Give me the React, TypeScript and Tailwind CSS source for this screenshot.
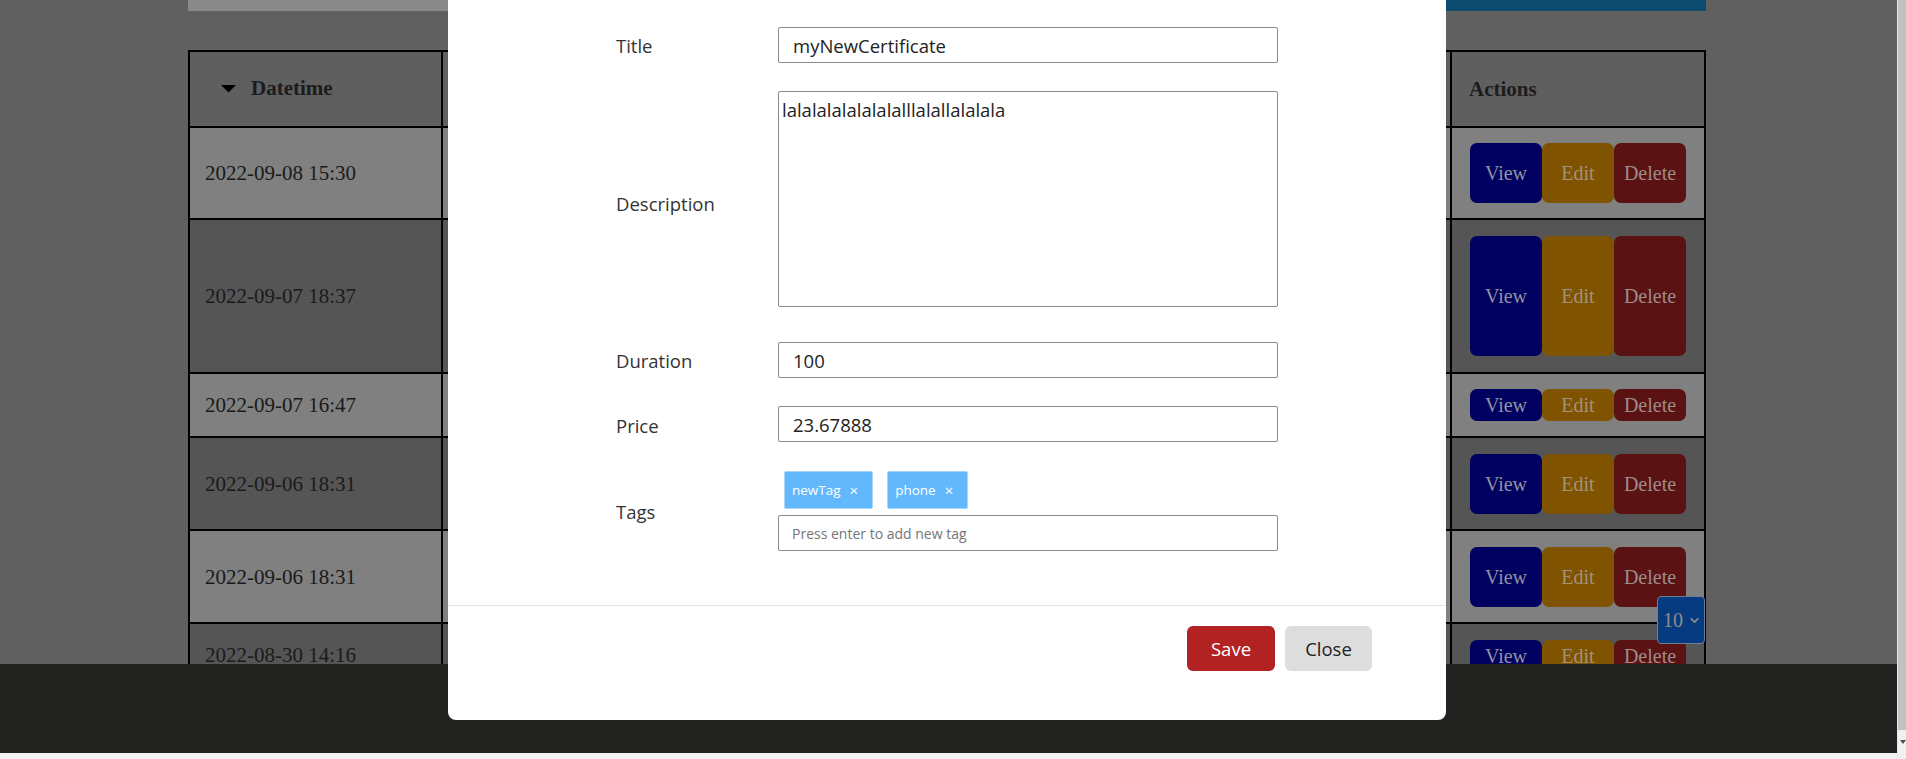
import React from 'react';
import { ChevronDown } from 'lucide-react';

interface Row {
  date: string;
  height: string;
  pad: string;
  dark: boolean;
}

const rows: Row[] = [
  { date: '2022-09-08 15:30', height: 'h-[92px]', pad: 'py-[15px]', dark: false },
  { date: '2022-09-07 18:37', height: 'h-[154px]', pad: 'py-4', dark: true },
  { date: '2022-09-07 16:47', height: 'h-[64px]', pad: 'py-[15px]', dark: false },
  { date: '2022-09-06 18:31', height: 'h-[93px]', pad: 'pt-4 pb-[15px]', dark: true },
  { date: '2022-09-06 18:31', height: 'h-[93px]', pad: 'pt-4 pb-[15px]', dark: false },
  { date: '2022-08-30 14:16', height: 'h-[64px]', pad: 'pt-4 pb-[14px]', dark: true },
];

const TableRow: React.FC<{ row: Row }> = ({ row }) => (
  <div className={`flex border-b-2 border-black ${row.height} ${row.dark ? 'bg-[#555555]' : 'bg-[#808080]'}`}>
    <div className="w-[253px] border-r-2 border-black flex items-center pl-[15px] pt-[2px] text-[21px] text-[#1a1a1a]">
      {row.date}
    </div>
    <div className="flex-1" />
    <div className={`w-[254px] border-l-2 border-black flex pl-[18px] ${row.pad}`}>
      <button className="w-[72px] h-full rounded-[7px] bg-[#000060] text-[20px] text-[#9292a0]">View</button>
      <button className="w-[72px] h-full rounded-[7px] bg-[#805300] text-[20px] text-[#a0927a]">Edit</button>
      <button className="w-[72px] h-full rounded-[7px] bg-[#5a1212] text-[20px] text-[#9c8c8c]">Delete</button>
    </div>
  </div>
);

const Field: React.FC<{ label: string; className: string; labelCls?: string; children: React.ReactNode }> = ({
  label,
  className,
  labelCls = 'pt-[2px]',
  children,
}) => (
  <div className={`flex items-center ${className}`}>
    <label className={`w-[162px] text-[18.5px] text-[#333333] ${labelCls}`}>{label}</label>
    {children}
  </div>
);

const inputCls =
  'w-[500px] h-[36px] border border-[#8a8a8a] rounded-[2px] px-[14px] text-[18.5px] text-[#222222] outline-none bg-white';

const Tag: React.FC<{ name: string }> = ({ name }) => (
  <span className="h-[38px] flex items-center bg-[#62b8fb] border border-[#a9d6f8] rounded-[2px] pl-[7px] pr-[14px] text-[13.5px] text-white">
    {name}
    <span className="ml-[9px] text-[15px] leading-none">×</span>
  </span>
);

export default function App() {
  return (
    <div className="relative flex w-[1906px] h-[759px] overflow-hidden bg-[#606060] font-['Liberation_Serif',serif]">
      {/* page behind the modal */}
      <div className="w-[1897px] flex flex-col">
        <div className="h-[664px] overflow-hidden">
          <div className="ml-[188px] w-[1518px] h-[11px] flex">
            <div className="w-[900px] bg-[#8a8a8a]" />
            <div className="flex-1 bg-[#0c4a6e]" />
          </div>

          <div className="ml-[188px] mt-[39px] w-[1518px] border-2 border-black">
            <div className="flex h-[76px] border-b-2 border-black bg-[#5f5f5f] font-bold text-[21px] text-[#1c1c1c]">
              <div className="w-[253px] border-r-2 border-black flex items-center pl-[31px] gap-[15px]">
                <svg width="15" height="8" viewBox="0 0 15 8">
                  <path d="M0 0H15L7.5 7.5Z" fill="#000" />
                </svg>
                <span>Datetime</span>
              </div>
              <div className="flex-1" />
              <div className="w-[254px] border-l-2 border-black flex items-center pl-[17px] pt-[2px]">Actions</div>
            </div>
            {rows.map((r, i) => (
              <TableRow key={i} row={r} />
            ))}
          </div>
        </div>
        <div className="h-[89px] bg-[#222220]" />
        <div className="h-[6px] bg-[#f1f1f1]" />
      </div>

      {/* vertical scrollbar */}
      <div className="w-[9px] flex flex-col border-l border-[#e8e8e8]">
        <div className="h-[730px] bg-[#c1c1c1]" />
        <div className="flex-1 bg-[#f1f1f1] flex justify-end pt-[10px]">
          <svg width="6" height="4" viewBox="0 0 6 4">
            <path d="M0 0H6L3 4Z" fill="#505050" />
          </svg>
        </div>
      </div>

      {/* page size select */}
      <div className="absolute left-[1657px] top-[596px] w-12 h-12 bg-[#073b80] border border-[#6f7f95] rounded-[4px] flex items-center pl-[5px] gap-[5px] text-[20px] text-[#8e8e8e]">
        <span>10</span>
        <ChevronDown size={13} strokeWidth={3} />
      </div>

      {/* modal */}
      <div className="absolute left-[448px] top-0 w-[998px] h-[720px] bg-white rounded-b-[8px] flex flex-col font-['Open_Sans',sans-serif]">
        <div className="h-[605px] pt-[27px] pl-[168px] flex flex-col">
          <Field label="Title" className="mb-[28px]">
            <input className={inputCls} defaultValue="myNewCertificate" />
          </Field>
          <Field label="Description" className="mb-[35px]" labelCls="pt-[9px]">
            <textarea
              className="w-[500px] h-[216px] border border-[#8a8a8a] rounded-[2px] pl-[3px] pt-[5px] text-[18.5px] text-[#222222] outline-none resize-none leading-[1.36]"
              defaultValue="lalalalalalalalalllalallalalala"
            />
          </Field>
          <Field label="Duration" className="mb-[28px]">
            <input className={inputCls} defaultValue="100" />
          </Field>
          <Field label="Price" className="mb-[29px]" labelCls="pt-[4px]">
            <input className={inputCls} defaultValue="23.67888" />
          </Field>
          <Field label="Tags" className="">
            <div className="flex flex-col gap-[6px]">
              <div className="flex gap-[14px] pl-[6px]">
                <Tag name="newTag" />
                <Tag name="phone" />
              </div>
              <input
                className="w-[500px] h-[36px] border border-[#8a8a8a] rounded-[2px] px-[13px] text-[14px] text-[#222222] placeholder:text-[#757575] outline-none"
                placeholder="Press enter to add new tag"
              />
            </div>
          </Field>
        </div>
        <div className="border-t border-[#e2e2e2] flex justify-end gap-[10px] pt-[20px] pr-[74px]">
          <button className="w-[88px] h-[45px] rounded-[6px] bg-[#b22222] text-white text-[18.5px]">Save</button>
          <button className="w-[87px] h-[45px] rounded-[6px] bg-[#dddddd] text-[#222222] text-[18.5px]">Close</button>
        </div>
      </div>
    </div>
  );
}
